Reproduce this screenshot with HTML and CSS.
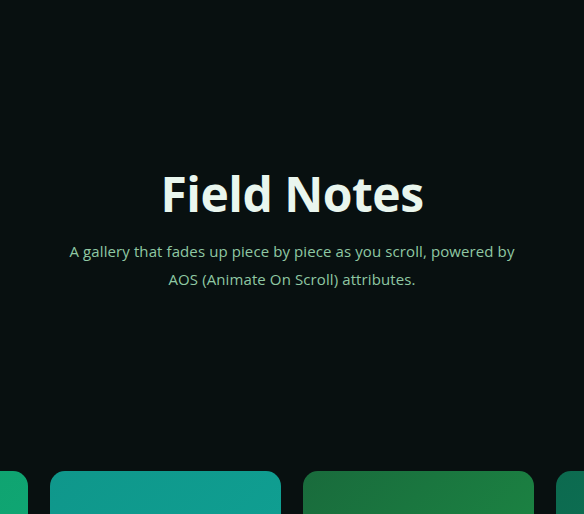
FILE: index.html
```html
<!DOCTYPE html>
<html lang="en">
<head>
<meta charset="utf-8">
<title>Field Notes</title>
<link rel="stylesheet" href="styles.css">
</head>
<body>
<header class="hero">
  <h1 class="title">Field Notes</h1>
  <p class="lede">A gallery that fades up piece by piece as you scroll, powered by AOS (Animate On Scroll) attributes.</p>
</header>
<main class="gallery-wrap">
  <div class="gallery">
    <div class="card card-1"></div>
    <div class="card card-2"></div>
    <div class="card card-3"></div>
    <div class="card card-4"></div>
  </div>
</main>
</body>
</html>
```
FILE: styles.css
```css
html, body {
  margin: 0;
  padding: 0;
  background: #081010;
  overflow: hidden;
  height: 100%;
}
body {
  font-family: "Open Sans", "Noto Sans", sans-serif;
  color: #e9f6ee;
}
.hero {
  display: flex;
  flex-direction: column;
  align-items: center;
  text-align: center;
  padding: 163px 24px 0;
  height: 309px;
  box-sizing: border-box;
}
.title {
  margin: 0;
  font-size: 48px;
  font-weight: 700;
  line-height: 62px;
  letter-spacing: -0.5px;
  color: #e9f6ee;
}
.lede {
  margin: 12px 0 0;
  max-width: 470px;
  font-size: 15px;
  line-height: 28px;
  letter-spacing: 0.1px;
  color: #8fc8a3;
}
.gallery-wrap {
  display: flex;
  justify-content: center;
  padding-top: 162px;
}
.gallery {
  flex: 0 0 990px;
  display: grid;
  grid-template-columns: repeat(4, 231px);
  gap: 22px;
}
.card {
  height: 280px;
  border-radius: 15px;
}
.card-1 { background: linear-gradient(135deg, #0e9e6c, #11ac78); }
.card-2 { background: linear-gradient(135deg, #0f978b, #10a496); }
.card-3 { background: linear-gradient(135deg, #196b3c, #1d9447); }
.card-4 { background: linear-gradient(135deg, #0c6a4f, #0f7d5c); }
```
